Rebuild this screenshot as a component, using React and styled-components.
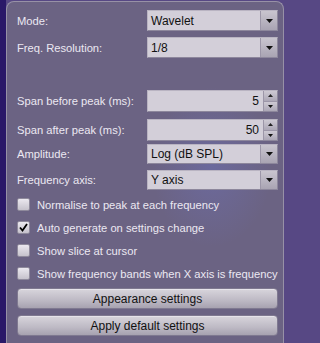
import React from "react";
import styled, { createGlobalStyle } from "styled-components";

const GlobalStyle = createGlobalStyle`
  html, body {
    margin: 0;
    padding: 0;
    background: #574884;
  }
  body {
    font-family: "Liberation Sans", Arial, sans-serif;
    font-size: 11px;
  }
`;

const Frame = styled.div`
  width: 289px;
  height: 343px;
  overflow: hidden;
  display: flex;
  background: linear-gradient(to right, #2a1868 0, #2a1868 6px, #574884 6px);
`;

const Panel = styled.div`
  flex: 1;
  margin: 1px 5px 0 6px;
  padding: 8px 5px 0 10px;
  border: 1px solid #9791a6;
  border-bottom: none;
  border-radius: 8px 8px 0 0;
  background:
    radial-gradient(ellipse 60px 80px at 205px 165px, rgba(110, 120, 215, 0.3), rgba(110, 120, 215, 0) 100%),
    #6b6383;
  display: flex;
  flex-direction: column;
`;

const Row = styled.div`
  display: flex;
  align-items: center;
  justify-content: space-between;
  height: ${(p) => p.h || 21}px;
  margin-top: ${(p) => p.gap || 0}px;
`;

const Label = styled.span`
  color: #ebe8f2;
  white-space: nowrap;
  font-size: 11.2px;
`;

const Field = styled.div`
  width: 131px;
  height: 100%;
  box-sizing: border-box;
  display: flex;
  background: #d3cfd9;
  border: 1px solid #8d879c;
  border-top-color: #b9b4c2;
  border-left-color: #b9b4c2;
  color: #111;
`;

const FieldText = styled.div`
  flex: 1;
  display: flex;
  align-items: center;
  justify-content: ${(p) => (p.right ? "flex-end" : "flex-start")};
  padding: 0 ${(p) => (p.right ? "4px" : "0")} 0 ${(p) => (p.right ? "0" : "3px")};
  font-size: 12px;
`;

const ArrowButton = styled.div`
  width: 16px;
  display: flex;
  align-items: center;
  justify-content: center;
  background: linear-gradient(#c9c5cf, #a9a4b3);
  border-left: 1px solid #9c96a8;
`;

const SpinColumn = styled.div`
  width: 13px;
  display: flex;
  flex-direction: column;
  border-left: 1px solid #9c96a8;
`;

const SpinHalf = styled.div`
  flex: 1;
  display: flex;
  align-items: center;
  justify-content: center;
  background: linear-gradient(#cdc9d3, #aca7b6);
  & + & {
    border-top: 1px solid #9c96a8;
  }
`;

const Spacer = styled.div`
  height: ${(p) => p.h}px;
  flex-shrink: 0;
`;

const CheckRow = styled.label`
  display: flex;
  align-items: center;
  gap: 7px;
  height: 23px;
  color: #ebe8f2;
  white-space: nowrap;
  font-size: 11.2px;
`;

const Box = styled.span`
  width: 13px;
  height: 13px;
  box-sizing: border-box;
  border: 1px solid #8f8a9c;
  border-radius: 2px;
  background: linear-gradient(#ebe8ef, #c6c2cc);
  display: flex;
  align-items: center;
  justify-content: center;
  flex-shrink: 0;
`;

const Button = styled.button`
  height: ${(p) => p.h || 21}px;
  margin-top: ${(p) => p.gap || 0}px;
  width: 100%;
  border: 1px solid #7f7990;
  border-radius: 4px;
  background: linear-gradient(#d8d5dc, #bdb9c4 60%, #a7a2b0);
  color: #111;
  font-family: "Liberation Sans", Arial, sans-serif;
  font-size: 12px;
  padding: 0;
  box-shadow: inset 0 1px 0 #e6e3ea;
`;

const Down = ({ w = 7, h = 4 }) => (
  <svg width={w} height={h} viewBox="0 0 7 4">
    <path d="M0 0 H7 L3.5 4 Z" fill="#111" />
  </svg>
);

const Up = () => (
  <svg width="5" height="3" viewBox="0 0 5 3">
    <path d="M0 3 H5 L2.5 0 Z" fill="#222" />
  </svg>
);

function Select({ value }) {
  return (
    <Field>
      <FieldText>{value}</FieldText>
      <ArrowButton>
        <Down />
      </ArrowButton>
    </Field>
  );
}

function Spin({ value }) {
  return (
    <Field>
      <FieldText right>{value}</FieldText>
      <SpinColumn>
        <SpinHalf>
          <Up />
        </SpinHalf>
        <SpinHalf>
          <Down w={5} h={3} />
        </SpinHalf>
      </SpinColumn>
    </Field>
  );
}

function Check({ checked, children }) {
  return (
    <CheckRow>
      <Box>
        {checked && (
          <svg width="9" height="9" viewBox="0 0 9 9">
            <path d="M1 4.5 L3.5 7.5 L8 1" stroke="#000" strokeWidth="1.8" fill="none" />
          </svg>
        )}
      </Box>
      {children}
    </CheckRow>
  );
}

export default function App() {
  return (
    <>
      <GlobalStyle />
      <Frame>
        <Panel>
          <Row>
            <Label>Mode:</Label>
            <Select value="Wavelet" />
          </Row>
          <Row gap={6}>
            <Label>Freq. Resolution:</Label>
            <Select value="1/8" />
          </Row>
          <Spacer h={32} />
          <Row h={22}>
            <Label>Span before peak (ms):</Label>
            <Spin value="5" />
          </Row>
          <Row h={22} gap={7}>
            <Label>Span after peak (ms):</Label>
            <Spin value="50" />
          </Row>
          <Row h={20} gap={3}>
            <Label>Amplitude:</Label>
            <Select value="Log (dB SPL)" />
          </Row>
          <Row h={20} gap={6}>
            <Label>Frequency axis:</Label>
            <Select value="Y axis" />
          </Row>
          <Spacer h={3} />
          <Check>Normalise to peak at each frequency</Check>
          <Check checked>Auto generate on settings change</Check>
          <Check>Show slice at cursor</Check>
          <Check>Show frequency bands when X axis is frequency</Check>
          <Button gap={3}>Appearance settings</Button>
          <Button gap={6}>Apply default settings</Button>
        </Panel>
      </Frame>
    </>
  );
}
